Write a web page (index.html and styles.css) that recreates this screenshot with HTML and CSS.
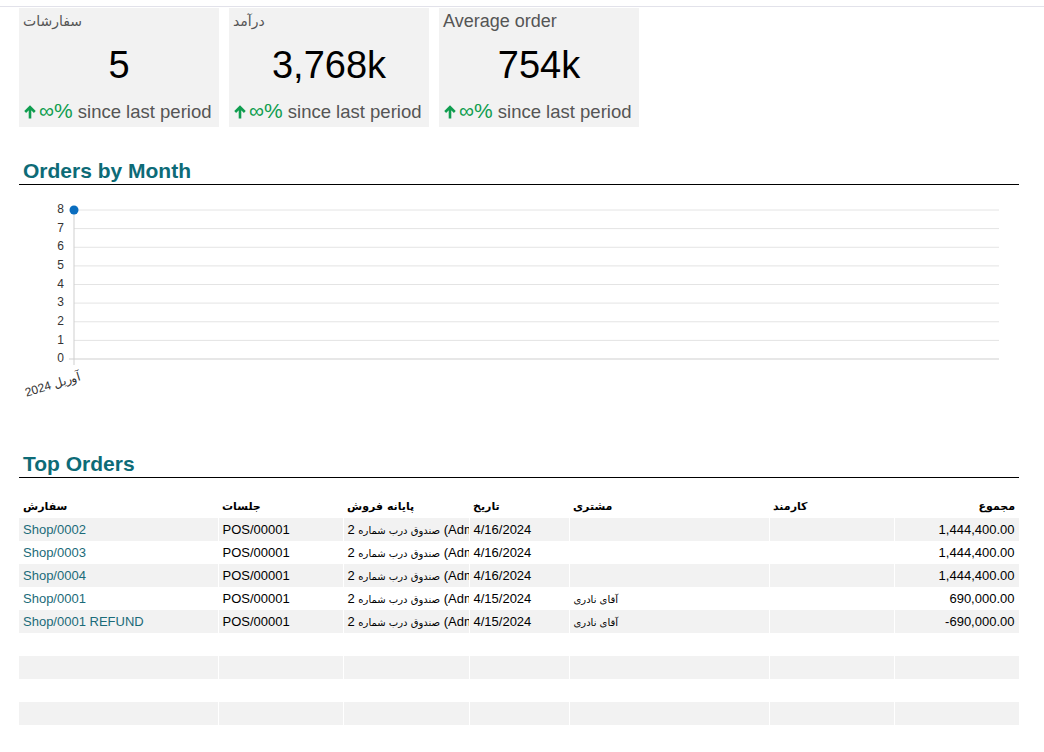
FILE: index.html
```html
<!DOCTYPE html>
<html lang="fa">
<head>
<meta charset="utf-8">
<title>Dashboard</title>
<link rel="stylesheet" href="styles.css">
</head>
<body>
<div class="topbar"></div>
<main class="page">
  <section class="cards">
    <div class="card">
      <div class="card-title fa-title">سفارشات</div>
      <div class="card-value">5</div>
      <div class="card-delta"><span class="up"><svg class="arrow" viewBox="0 0 12 14" width="12" height="14"><path d="M6 13.5V2.5M1.2 7L6 2.2 10.8 7" fill="none" stroke="currentColor" stroke-width="2.6"/></svg>∞%</span> since last period</div>
    </div>
    <div class="card">
      <div class="card-title fa-title">درآمد</div>
      <div class="card-value">3,768k</div>
      <div class="card-delta"><span class="up"><svg class="arrow" viewBox="0 0 12 14" width="12" height="14"><path d="M6 13.5V2.5M1.2 7L6 2.2 10.8 7" fill="none" stroke="currentColor" stroke-width="2.6"/></svg>∞%</span> since last period</div>
    </div>
    <div class="card">
      <div class="card-title">Average order</div>
      <div class="card-value">754k</div>
      <div class="card-delta"><span class="up"><svg class="arrow" viewBox="0 0 12 14" width="12" height="14"><path d="M6 13.5V2.5M1.2 7L6 2.2 10.8 7" fill="none" stroke="currentColor" stroke-width="2.6"/></svg>∞%</span> since last period</div>
    </div>
  </section>

  <section class="panel">
    <h2 class="panel-title">Orders by Month</h2>
    <svg class="chart" viewBox="0 0 1000 220" width="1000" height="220">
      <g class="grid">
        <line x1="55" x2="980" y1="22" y2="22"/>
        <line x1="55" x2="980" y1="40.6" y2="40.6"/>
        <line x1="55" x2="980" y1="59.25" y2="59.25"/>
        <line x1="55" x2="980" y1="77.9" y2="77.9"/>
        <line x1="55" x2="980" y1="96.5" y2="96.5"/>
        <line x1="55" x2="980" y1="115.1" y2="115.1"/>
        <line x1="55" x2="980" y1="133.75" y2="133.75"/>
        <line x1="55" x2="980" y1="152.4" y2="152.4"/>
      </g>
      <line class="axis" x1="50" x2="980" y1="171" y2="171"/>
      <line class="axis" x1="55" x2="55" y1="22" y2="177"/>
      <g class="ylabels">
        <text x="45" y="22">8</text>
        <text x="45" y="40.6">7</text>
        <text x="45" y="59.25">6</text>
        <text x="45" y="77.9">5</text>
        <text x="45" y="96.5">4</text>
        <text x="45" y="115.1">3</text>
        <text x="45" y="133.75">2</text>
        <text x="45" y="152.4">1</text>
        <text x="45" y="171">0</text>
      </g>
      <text class="xlabel" x="62" y="192" transform="rotate(-17 62 192)">آوریل 2024</text>
      <circle cx="55" cy="22" r="4.5" fill="#0a6dbf"/>
    </svg>
  </section>

  <section class="panel">
    <h2 class="panel-title panel-title--table">Top Orders</h2>
    <table class="orders">
      <colgroup>
        <col class="c-order"><col class="c-session"><col class="c-pos"><col class="c-date"><col class="c-customer"><col class="c-employee"><col class="c-total">
      </colgroup>
      <thead>
        <tr><th>سفارش</th><th>جلسات</th><th>پایانه فروش</th><th>تاریخ</th><th>مشتری</th><th>کارمند</th><th class="num">مجموع</th></tr>
      </thead>
      <tbody>
        <tr><td><span class="link">Shop/0002</span></td><td>POS/00001</td><td><span class="fa">صندوق درب شماره</span> 2 (Admin)</td><td>4/16/2024</td><td></td><td></td><td class="num">1,444,400.00</td></tr>
        <tr><td><span class="link">Shop/0003</span></td><td>POS/00001</td><td><span class="fa">صندوق درب شماره</span> 2 (Admin)</td><td>4/16/2024</td><td></td><td></td><td class="num">1,444,400.00</td></tr>
        <tr><td><span class="link">Shop/0004</span></td><td>POS/00001</td><td><span class="fa">صندوق درب شماره</span> 2 (Admin)</td><td>4/16/2024</td><td></td><td></td><td class="num">1,444,400.00</td></tr>
        <tr><td><span class="link">Shop/0001</span></td><td>POS/00001</td><td><span class="fa">صندوق درب شماره</span> 2 (Admin)</td><td>4/15/2024</td><td><span class="fa">آقای نادری</span></td><td></td><td class="num">690,000.00</td></tr>
        <tr><td><span class="link">Shop/0001 REFUND</span></td><td>POS/00001</td><td><span class="fa">صندوق درب شماره</span> 2 (Admin)</td><td>4/15/2024</td><td><span class="fa">آقای نادری</span></td><td></td><td class="num">-690,000.00</td></tr>
        <tr><td></td><td></td><td></td><td></td><td></td><td></td><td></td></tr>
        <tr><td></td><td></td><td></td><td></td><td></td><td></td><td></td></tr>
        <tr><td></td><td></td><td></td><td></td><td></td><td></td><td></td></tr>
        <tr><td></td><td></td><td></td><td></td><td></td><td></td><td></td></tr>
      </tbody>
    </table>
  </section>
</main>
</body>
</html>
```

FILE: styles.css
```css
html, body {
  margin: 0;
  padding: 0;
  background: #fff;
}

body {
  font-family: "Liberation Sans", Arial, "DejaVu Sans", sans-serif;
  color: #000;
}

.topbar {
  height: 6px;
  border-bottom: 1px solid #e2e2ea;
}

.page {
  width: 1000px;
  padding: 0 25px 0 19px;
}

/* KPI cards */
.cards {
  display: flex;
  gap: 10px;
  margin-top: 1px;
}

.card {
  width: 200px;
  height: 119px;
  box-sizing: border-box;
  background: #f2f2f2;
  padding: 2px 4px 0;
  display: flex;
  flex-direction: column;
}

.card-title {
  font-size: 18px;
  line-height: 22px;
  color: #555;
  white-space: nowrap;
}

.fa-title {
  font-family: "DejaVu Sans", sans-serif;
  font-size: 14px;
}

.card-value {
  margin-top: 10px;
  font-size: 38px;
  line-height: 46px;
  text-align: center;
  color: #000;
}

.card-delta {
  margin-top: 12px;
  font-size: 18.5px;
  line-height: 22px;
  color: #555;
  white-space: nowrap;
  padding-left: 1px;
}

.up {
  color: #0f9d4f;
  font-size: 21px;
}

.arrow {
  display: inline-block;
  vertical-align: -1px;
  margin-right: 3px;
}

/* Panels */
.panel-title {
  margin: 33px 0 0;
  padding: 0 4px 2px;
  font-size: 21px;
  line-height: 22px;
  font-weight: bold;
  color: #0d6b77;
  border-bottom: 1px solid #000;
}

.panel-title--table {
  margin-top: 45px;
}

.chart {
  display: block;
  margin-top: 3px;
  font-family: "Liberation Sans", Arial, sans-serif;
}

.chart .grid line {
  stroke: #e4e4e4;
  stroke-width: 1;
}

.chart .axis {
  stroke: #cfcfcf;
  stroke-width: 1;
}

.chart .ylabels text {
  font-size: 12px;
  fill: #333;
  text-anchor: end;
  dominant-baseline: middle;
}

.chart .xlabel {
  font-size: 12px;
  fill: #333;
  text-anchor: end;
}

/* Table */
.orders {
  width: 1000px;
  table-layout: fixed;
  border-collapse: collapse;
  margin-top: 17px;
}

.c-order { width: 199px; }
.c-session { width: 125px; }
.c-pos { width: 126px; }
.c-date { width: 100px; }
.c-customer { width: 200px; }
.c-employee { width: 125px; }
.c-total { width: 125px; }

.orders th {
  height: 23px;
  padding: 0 4px;
  text-align: left;
  font-family: "DejaVu Sans", sans-serif;
  font-size: 11px;
  font-weight: bold;
  white-space: nowrap;
}

.orders td {
  height: 23px;
  box-sizing: border-box;
  padding: 0 4px;
  font-size: 13px;
  line-height: 21px;
  white-space: nowrap;
  overflow: hidden;
  border-right: 1px solid #fff;
}

.orders tbody tr:nth-child(odd) {
  background: #f2f2f2;
}

.orders .num {
  text-align: right;
}

.link {
  color: #1b6b79;
}

.fa {
  font-family: "DejaVu Sans", sans-serif;
  font-size: 10px;
  line-height: 1;
}
```
